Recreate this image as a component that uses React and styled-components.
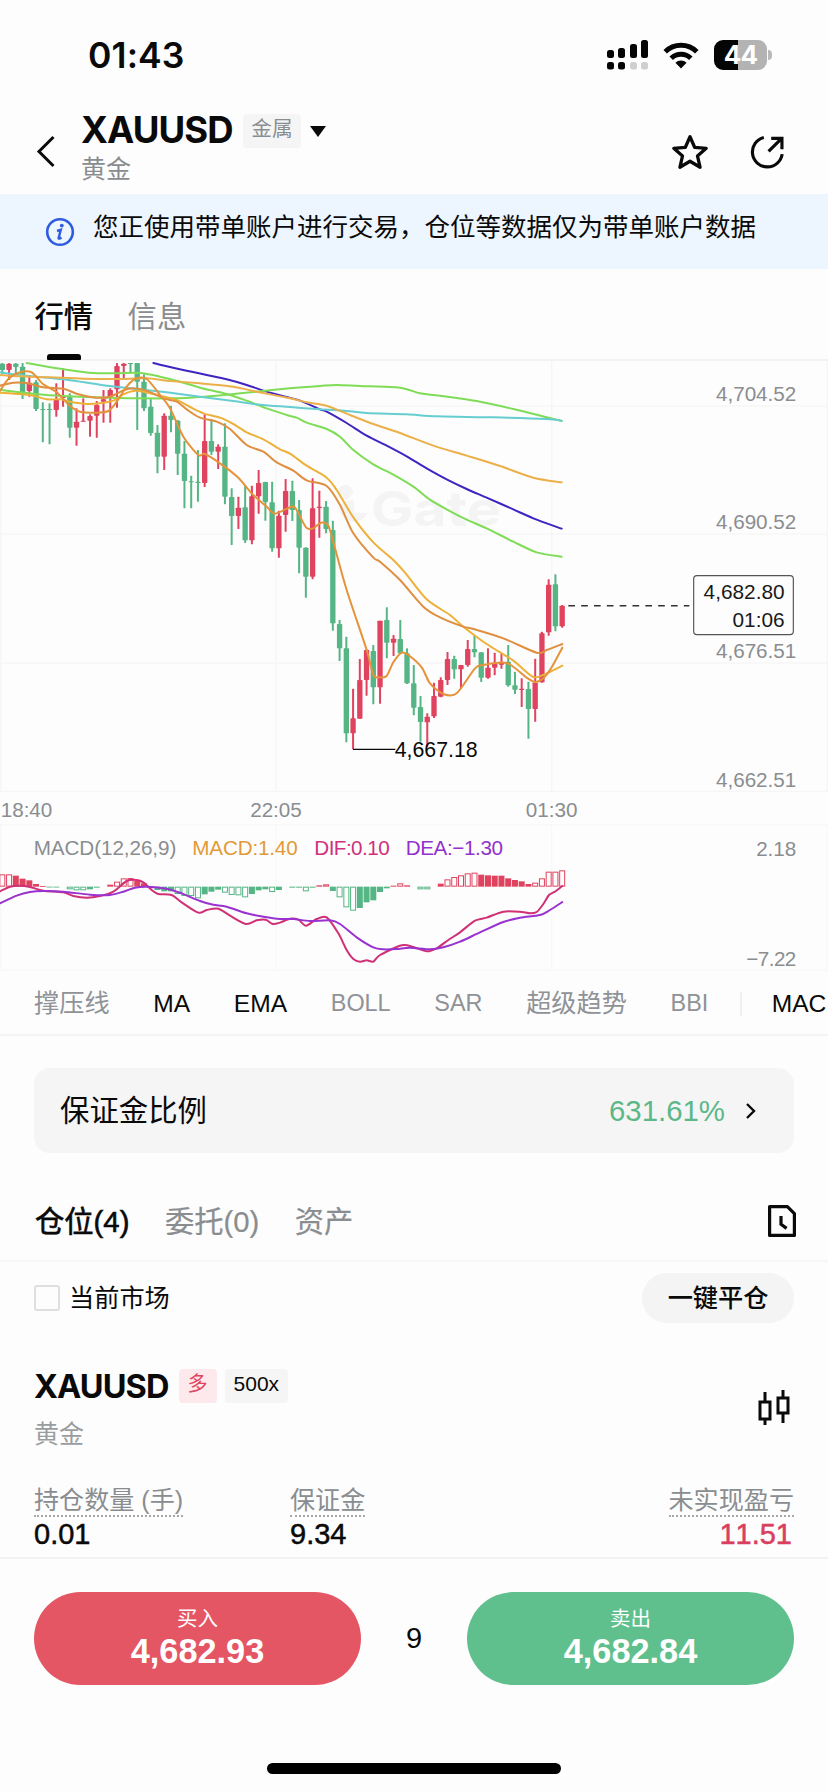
import React from "react";
import styled, { createGlobalStyle } from "styled-components";

const GlobalStyle = createGlobalStyle`
  * { box-sizing: border-box; }
  body { margin: 0; background: #fdfdfd; }
`;

const UP = "#e0435f";
const DOWN = "#56b584";
const FONT = `"Liberation Sans", "Noto Sans CJK SC", sans-serif`;

const Screen = styled.div`
  width: 828px;
  height: 1792px;
  overflow: hidden;
  background: #fdfdfd;
  color: #0a0a0a;
  font-family: ${FONT};
  display: flex;
  flex-direction: column;
  white-space: nowrap;
`;

const StatusBar = styled.div`
  height: 108px;
  flex: none;
  display: flex;
  align-items: center;
  justify-content: space-between;
  padding: 2px 56px 0 88px;
`;
const Time = styled.div`
  font: 600 35.5px/40px Inter, ${FONT};
  letter-spacing: 0.1px;
  padding-top: 1px;
`;
const StatusIcons = styled.div`
  display: flex;
  align-items: center;
  gap: 15px;
`;
const Battery = styled.div`
  width: 53px;
  height: 30px;
  border-radius: 9px;
  background: linear-gradient(90deg, #050505 45%, #b3b3b3 45%);
  color: #fff;
  font: 700 26px/30px Inter, ${FONT};
  letter-spacing: -0.8px;
  text-align: center;
`;
const BatteryGroup = styled.div`
  display: flex;
  align-items: center;
  gap: 1px;
`;
const BatteryTip = styled.div`
  width: 4px;
  height: 10px;
  border-radius: 0 5px 5px 0;
  background: #b9b9b9;
`;

const Header = styled.header`
  height: 86px;
  flex: none;
  display: flex;
  padding: 0 42px 0 36px;
`;
const BackIcon = styled.svg`
  width: 20px;
  height: 34px;
  margin: 26px 25px 0 0;
`;
const HeaderInfo = styled.div`
  flex: 1;
  padding-top: 1px;
`;
const SymbolRow = styled.div`
  display: flex;
  align-items: center;
  height: 44px;
`;
const Symbol = styled.div`
  font: 700 ${(p) => p.$size}px/1.2 Inter, ${FONT};
  letter-spacing: ${(p) => p.$spacing}px;
`;
const Tag = styled.div`
  height: ${(p) => p.$height || 34}px;
  padding: 0 ${(p) => p.$pad}px;
  margin-left: ${(p) => p.$gap}px;
  border-radius: 4px;
  background: ${(p) => p.$bg || "#f5f5f5"};
  color: ${(p) => p.$color || "#0a0a0a"};
  font-size: ${(p) => p.$size || 21}px;
  line-height: ${(p) => p.$line || 30}px;
`;
const Caret = styled.div`
  margin-left: 9px;
  border: 8px solid transparent;
  border-top: 11px solid #0a0a0a;
  border-bottom: 0;
`;
const SubName = styled.div`
  margin-top: ${(p) => p.$top || 0}px;
  font-size: 25px;
  line-height: 32px;
  color: ${(p) => p.$color || "#8a8d90"};
`;
const HeaderIcons = styled.div`
  display: flex;
  gap: 38px;
  padding-top: 24px;
`;

const Banner = styled.div`
  height: 75px;
  flex: none;
  background: #edf5fe;
  display: flex;
  padding: 0 45px;
  font-size: 25.5px;
  line-height: 66px;
`;
const InfoIcon = styled.svg`
  width: 30px;
  height: 30px;
  margin: 23px 18px 0 0;
`;

const MainTabs = styled.nav`
  height: 92px;
  flex: none;
  display: flex;
  gap: 34.5px;
  padding-left: 34.5px;
  border-bottom: 2px solid #f2f2f3;
`;
const MainTab = styled.div`
  display: flex;
  flex-direction: column;
  align-items: center;
  justify-content: space-between;
  font-size: 29.3px;
  line-height: 95px;
  height: 91px;
  color: ${(p) => (p.$active ? "#0a0a0a" : "#8a8d90")};
  font-weight: ${(p) => (p.$active ? 500 : 400)};
`;
const TabLabel = styled.span`
  height: 84px;
`;
const TabMark = styled.i`
  width: 34px;
  height: 6px;
  border-radius: 3px 3px 1px 1px;
  background: #050505;
`;

const Pane = styled.svg`
  display: block;
  width: 828px;
  height: ${(p) => p.$height}px;
  flex: none;
  font-family: ${FONT};
`;

const IndicatorBar = styled.div`
  height: 64px;
  flex: none;
  display: flex;
  align-items: flex-start;
  gap: 43.7px;
  padding-left: 34px;
  border-bottom: 2px solid #f4f4f5;
  overflow: hidden;
`;
const Indicator = styled.span`
  flex: none;
  font-size: ${(p) => (p.$cjk ? 25.2 : p.$on ? 24.6 : 23.4)}px;
  line-height: 63px;
  color: ${(p) => (p.$on ? "#0a0a0a" : "#8f9296")};
`;
const IndicatorDivider = styled.i`
  flex: none;
  width: 2px;
  height: 24px;
  margin: 20px -14px 0 -12px;
  background: #efeff0;
`;

const MarginCard = styled.div`
  height: 85px;
  flex: none;
  margin: 32px 34px 0;
  padding: 0 38px 0 26px;
  border-radius: 16px;
  background: #f5f5f5;
  display: flex;
  align-items: center;
  font-size: 29.4px;
`;
const MarginLabel = styled.span`
  padding-bottom: 5px;
`;
const MarginValue = styled.span`
  margin-left: auto;
  margin-right: 20px;
  color: #5cb889;
  font-size: 29.4px;
`;

const PositionTabs = styled.nav`
  height: 109px;
  flex: none;
  display: flex;
  gap: 35.5px;
  padding: 27px 31px 0 35px;
  border-bottom: 2px solid #f7f7f7;
  font-size: 29.3px;
  line-height: 83px;
`;
const PositionTab = styled.span`
  color: ${(p) => (p.$active ? "#0a0a0a" : "#8a8d90")};
  -webkit-text-stroke: ${(p) => (p.$active ? "0.6px #0a0a0a" : "0.2px #8a8d90")};
`;
const HistoryIcon = styled.svg`
  width: 30px;
  height: 34px;
  margin: 24px 0 0 auto;
`;

const FilterRow = styled.div`
  height: 71px;
  flex: none;
  display: flex;
  align-items: center;
  padding: 0 34px;
  font-size: 25.2px;
`;
const FilterLabel = styled.span`
  padding-bottom: 4px;
`;
const Checkbox = styled.i`
  width: 26px;
  height: 26px;
  margin-right: 9px;
  border: 2px solid #dedfe0;
  border-radius: 3px;
`;
const CloseAll = styled.button`
  margin-left: auto;
  width: 152px;
  height: 50px;
  border: 0;
  border-radius: 25px;
  background: #f4f4f4;
  color: #0a0a0a;
  font: 500 25.2px/48px ${FONT};
  padding: 0;
`;

const Position = styled.section`
  height: 226px;
  flex: none;
  padding: 31px 34px 0;
  border-bottom: 2px solid #f2f2f2;
`;
const PositionHead = styled.div`
  display: flex;
  justify-content: space-between;
  height: 102px;
`;
const Stats = styled.div`
  display: grid;
  grid-template-columns: 256px 1fr auto;
  padding-top: 19px;
`;
const Stat = styled.div`
  display: flex;
  flex-direction: column;
  align-items: ${(p) => (p.$right ? "flex-end" : "flex-start")};
`;
const StatLabel = styled.span`
  font-size: 25.1px;
  line-height: 31px;
  height: 32px;
  color: #8a8d90;
  border-bottom: 2px dotted #a5a7aa;
`;
const StatValue = styled.span`
  font-size: 29px;
  line-height: 35px;
  font-kerning: none;
  padding-right: 2px;
  color: ${(p) => p.$color || "#0a0a0a"};
  -webkit-text-stroke: 0.5px ${(p) => p.$color || "#0a0a0a"};
`;
const CandleIcon = styled.svg`
  width: 34px;
  height: 38px;
  margin: 24px 3px 0 0;
`;

const TradeBar = styled.footer`
  display: flex;
  flex: none;
  align-items: center;
  justify-content: space-between;
  padding: 33px 34px 0;
`;
const TradeButton = styled.button`
  width: 327px;
  height: 93px;
  padding: 0;
  border: 0;
  border-radius: 47px;
  background: ${(p) => p.$bg};
  color: #fff;
  font-family: ${FONT};
  display: flex;
  flex-direction: column;
  align-items: center;
`;
const TradeLabel = styled.span`
  font-size: 20.5px;
  line-height: 26px;
  margin-top: 14px;
`;
const TradePrice = styled.span`
  font-weight: 700;
  font-size: 34.3px;
  line-height: 39px;
`;
const Spread = styled.span`
  font-size: 29px;
`;
const HomeBar = styled.i`
  width: 294px;
  height: 11px;
  flex: none;
  margin: 78px auto 0;
  border-radius: 6px;
  background: #000;
`;

/* Panes are drawn at three units per pixel. */
const STEP = 20.235;
const cx = (i) => 7 + STEP * i;

/* direction, high, body top, body bottom, low */
const candles = [
  ["d", 24, 26, 45, 58], ["u", 24, 26, 45, 75], ["d", 24, 26, 36, 55], ["d", 24, 35, 120, 132],
  ["u", 62, 83, 108, 125], ["d", 75, 82, 162, 168], ["d", 142, 162, 165, 262], ["d", 145, 162, 165, 268],
  ["u", 85, 135, 165, 185], ["u", 40, 124, 129, 155], ["d", 115, 122, 218, 248], ["u", 160, 200, 218, 272],
  ["u", 130, 197, 200, 200], ["u", 178, 183, 197, 245], ["u", 138, 150, 182, 248], ["u", 105, 133, 140, 203],
  ["u", 100, 105, 125, 203], ["u", 24, 33, 103, 158], ["u", 24, 26, 33, 70], ["d", 24, 24, 25, 55],
  ["d", 24, 24, 80, 225], ["d", 58, 80, 160, 168], ["d", 132, 155, 234, 242], ["d", 210, 233, 305, 355],
  ["u", 175, 182, 305, 345], ["d", 152, 182, 195, 232], ["d", 195, 197, 296, 360], ["d", 258, 296, 378, 460],
  ["d", 362, 379, 382, 460], ["d", 285, 380, 384, 440], ["u", 178, 258, 384, 396], ["d", 192, 258, 290, 300],
  ["u", 268, 275, 290, 342], ["d", 205, 275, 425, 448], ["d", 400, 426, 483, 570], ["u", 425, 458, 483, 522],
  ["d", 392, 457, 556, 564], ["u", 392, 424, 556, 568], ["u", 345, 384, 424, 476], ["d", 380, 381, 441, 497],
  ["d", 380, 442, 580, 590], ["u", 467, 482, 580, 608], ["u", 372, 408, 480, 530], ["d", 377, 408, 465, 498],
  ["d", 435, 465, 578, 655], ["d", 577, 578, 665, 728], ["u", 370, 460, 665, 673], ["u", 407, 455, 459, 548],
  ["d", 438, 455, 522, 535], ["d", 497, 525, 805, 827], ["d", 795, 807, 880, 918], ["d", 845, 880, 1135, 1162],
  ["u", 1001, 1090, 1135, 1183], ["u", 912, 975, 1091, 1091], ["u", 883, 885, 975, 1022], ["d", 870, 888, 997, 1048],
  ["u", 797, 797, 997, 1046], ["d", 757, 795, 863, 910], ["u", 840, 851, 863, 903], ["d", 795, 852, 895, 897],
  ["d", 880, 895, 985, 987], ["d", 930, 985, 1058, 1081], ["d", 1023, 1056, 1101, 1160], ["u", 1075, 1085, 1102, 1175],
  ["u", 983, 1023, 1084, 1089], ["u", 967, 975, 1025, 1027], ["u", 891, 912, 975, 990], ["d", 902, 912, 943, 971],
  ["u", 930, 930, 943, 1001], ["u", 855, 882, 930, 935], ["d", 842, 882, 892, 907], ["d", 892, 892, 968, 981],
  ["u", 880, 938, 968, 971], ["u", 893, 925, 938, 961], ["u", 895, 923, 929, 941], ["d", 870, 920, 991, 995],
  ["d", 950, 991, 1004, 1017], ["u", 970, 1001, 1005, 1056], ["d", 980, 1002, 1062, 1151], ["u", 911, 983, 1062, 1100],
  ["u", 830, 835, 982, 983], ["u", 673, 689, 832, 842], ["d", 658, 688, 814, 829], ["u", 750, 752, 814, 818],
];

const averages = [
  ["#4024c2", "460,24 500,34 560,47 620,60 680,73 740,90 800,110 860,126 900,137 960,163 980,170 1040,204 1100,242 1160,272 1220,304 1280,340 1340,373 1400,402 1460,428 1540,463 1600,490 1685,521"],
  ["#7fdc56", "80,24 130,33 200,44 280,54 330,55 420,54 480,65 540,80 600,98 680,117 740,137 800,160 870,183 890,188 920,203 980,222 1020,245 1060,285 1120,328 1180,359 1240,395 1290,434 1340,463 1400,494 1460,520 1540,560 1610,592 1685,605"],
  ["#7fdc56", "0,104 60,112 140,120 240,125 330,128 420,130 520,130 600,126 680,119 760,111 870,100 960,93 1010,90 1080,93 1200,98 1260,115 1320,122 1430,138 1540,162 1640,187 1685,198"],
  ["#66cdd0", "0,52 80,62 200,74 300,89 400,101 500,112 600,125 700,138 780,149 870,156 960,163 1040,168 1100,174 1220,178 1310,184 1480,187 1640,192 1685,197"],
  ["#ecb04a", "0,60 60,64 150,67 250,71 350,72 440,70 500,77 600,85 700,95 760,108 870,130 920,142 980,152 1040,176 1120,207 1200,234 1300,272 1400,302 1500,333 1600,368 1685,382"],
  ["#edb139", "0,113 60,117 100,122 140,133 180,133 210,140 260,147 300,145 340,137 370,118 400,108 430,110 480,122 530,135 570,156 610,175 660,188 700,207 740,232 790,253 840,283 870,296 920,332 980,368 1010,405 1060,487 1120,562 1180,615 1215,653 1280,733 1350,780 1390,815 1460,867 1540,917 1600,966 1640,955 1687,932"],
  ["#df8f3f", "0,92 40,83 80,84 130,97 190,101 230,116 290,128 330,125 370,106 400,100 440,107 490,130 530,140 560,163 600,188 650,200 690,222 740,270 790,290 830,322 880,347 920,376 980,393 1020,450 1060,535 1120,608 1140,620 1200,675 1270,755 1320,787 1390,815 1420,822 1510,850 1610,893 1640,885 1687,867"],
  ["#e5933a", "0,108 25,72 60,52 95,52 130,88 170,112 210,153 240,170 290,173 325,168 350,140 380,95 405,72 440,72 480,120 510,160 550,245 595,300 615,297 660,325 715,368 755,415 800,455 825,476 875,455 890,465 918,517 940,520 963,503 985,512 1005,580 1040,705 1100,885 1120,960 1140,967 1160,963 1180,922 1205,893 1225,900 1265,937 1290,985 1330,1017 1370,1015 1425,940 1450,930 1520,924 1580,968 1605,981 1630,970 1655,937 1687,878"],
];

/* kind: hollow (h) or filled (f), then bar end; index follows the candles */
const macdBars = [
  "h283", "h283", "f287", "f296", "f301", "f312", "f318", "f322", "f322", "", "h328", "h331", "h331", "f328", "f323",
  "", "h314", "h305", "h295", "h294", "f303", "f310", "f319", "f330", "f334", "f334", "h342", "h348", "h348", "h355",
  "f343", "f335", "f329", "h338", "h345", "h346", "h352", "f342", "f331", "f328", "h336", "f330", "", "f323", "f323",
  "h334", "f323", "f316", "h313", "f333", "h352", "h382", "h392", "f384", "f367", "f361", "f336", "f325", "f317", "h310",
  "f316", "", "h328", "h328", "", "f311", "h298", "h291", "h286", "h280", "h278", "f284", "f286", "f287", "f287",
  "f295", "f300", "f304", "f312", "h308", "h295", "h275", "h275", "h271",
];
const DIF = "0,334 30,320 60,317 90,321 130,332 190,337 220,348 260,353 300,348 340,335 380,303 410,300 430,307 455,330 475,342 515,345 545,367 595,398 620,390 655,386 690,407 738,432 770,421 797,419 818,432 840,428 870,416 895,419 918,437 950,417 980,412 1015,460 1040,510 1060,537 1080,545 1100,541 1120,545 1140,525 1205,496 1240,501 1280,514 1310,505 1345,480 1380,457 1425,422 1460,413 1510,395 1565,396 1590,400 1610,396 1630,372 1647,345 1665,335 1687,318";
const DEA = "0,370 50,347 90,336 130,333 190,335 270,344 330,345 370,335 405,323 440,320 500,326 545,340 600,363 640,374 680,380 740,400 790,410 840,417 880,417 930,423 990,421 1020,432 1070,472 1120,502 1150,508 1190,507 1230,503 1290,508 1330,502 1380,485 1440,457 1510,426 1560,413 1620,405 1650,390 1687,366";

/* Catmull-Rom spline through "x,y x,y ..." */
function curve(text) {
  const p = text.split(" ").map((s) => s.split(",").map(Number));
  let d = `M${p[0]}`;
  for (let i = 0; i < p.length - 1; i++) {
    const a = p[i - 1] || p[i];
    const b = p[i];
    const c = p[i + 1];
    const e = p[i + 2] || c;
    d += `C${b[0] + (c[0] - a[0]) / 7},${b[1] + (c[1] - a[1]) / 7} ${c[0] - (e[0] - b[0]) / 7},${c[1] - (e[1] - b[1]) / 7} ${c}`;
  }
  return d;
}

function PricePane() {
  return (
    <Pane viewBox="0 18 2484 1293" $height={431}>
      <g stroke="#f6f6f7" strokeWidth="4">
        {[153, 537, 924, 1309].map((y) => <path key={y} d={`M0 ${y}H2484`} />)}
        {[2, 828, 1655, 2482].map((x) => <path key={x} d={`M${x} 20V1311`} />)}
      </g>
      <g fill="#f4f4f5">
        <text x="1112" y="513" fontFamily="Inter" fontWeight="700" fontSize="144" textLength="390" lengthAdjust="spacingAndGlyphs">Gate</text>
        <path d="M1020 432a24 24 0 1 1 40 -20l-18 22zM1018 452a44 44 0 0 0 84 22h-40v-38h-20z" />
      </g>
      {candles.map(([dir, high, top, bottom, low], i) => (
        <g key={i} fill={dir === "u" ? UP : DOWN}>
          <rect x={cx(i) - 3} y={high} width="6" height={low - high} rx="1.5" />
          <rect x={cx(i) - 8} y={top} width="16" height={Math.max(bottom - top, 3)} rx="2" />
        </g>
      ))}
      {averages.map(([color, pts], i) => (
        <path key={i} d={curve(pts)} fill="none" stroke={color} strokeWidth="6" strokeLinecap="round" />
      ))}
      <path d="M1059 1183H1186" stroke="#0a0a0a" strokeWidth="4" />
      <text x="1184" y="1207" fontSize="64" fill="#0a0a0a">4,667.18</text>
      <g fontSize="62" fill="#8a8d90" textAnchor="end">
        <text x="2389" y="137">4,704.52</text>
        <text x="2389" y="522">4,690.52</text>
        <text x="2389" y="909">4,676.51</text>
        <text x="2389" y="1295">4,662.51</text>
      </g>
      <path d="M1705 752H2068" stroke="#333" strokeWidth="4.5" strokeDasharray="20 18.5" />
      <rect x="2081" y="662" width="299" height="177" rx="10" fill="#fdfdfd" stroke="#555" strokeWidth="3.5" />
      <g fontSize="62.5" fill="#1a1a1a" textAnchor="end">
        <text x="2354" y="732">4,682.80</text>
        <text x="2354" y="816">01:06</text>
      </g>
    </Pane>
  );
}

function MacdPane() {
  return (
    <Pane viewBox="0 36 2484 540" $height={180}>
      <g stroke="#f8f8f9" strokeWidth="4">
        <path d="M0 134H2484M0 571H2484M2 136V571M828 136V571M1655 136V571M2482 136V571" />
      </g>
      <g fontSize="62" fill="#8a8d90">
        <text x="2" y="111">18:40</text>
        <text x="828" y="111" textAnchor="middle">22:05</text>
        <text x="1655" y="111" textAnchor="middle">01:30</text>
        <text x="101" y="226" textLength="428">MACD(12,26,9)</text>
        <text x="2389" y="228" textAnchor="end">2.18</text>
        <text x="2389" y="557" textAnchor="end" textLength="150">−7.22</text>
        <text x="577" y="226" fill="#e29a38" textLength="316">MACD:1.40</text>
        <text x="943" y="226" fill="#cf3080" textLength="226">DIF:0.10</text>
        <text x="1217" y="226" fill="#9232cc" textLength="292">DEA:−1.30</text>
      </g>
      {macdBars.map((bar, i) => {
        if (!bar) return null;
        const end = Number(bar.slice(1));
        const up = end < 320.5;
        const color = up ? UP : DOWN;
        const hollow = bar[0] === "h";
        const inset = hollow ? 1.5 : 0;
        const y = up ? end : 320;
        const h = Math.max(Math.abs(320 - end), 2.5);
        return (
          <rect key={i} x={cx(i) - 9 + inset} y={y + inset} width={18 - inset * 2} height={Math.max(h - inset * 2, 1)}
            fill={hollow ? "none" : color} stroke={hollow ? color : "none"} strokeWidth="3" />
        );
      })}
      <path d={curve(DIF)} fill="none" stroke="#cf3076" strokeWidth="6" strokeLinecap="round" />
      <path d={curve(DEA)} fill="none" stroke="#9a32d0" strokeWidth="6" strokeLinecap="round" />
    </Pane>
  );
}

function SignalIcon() {
  const bars = [[0, 10], [11, 8], [23, 4], [34, 0]];
  return (
    <svg width="41" height="30" viewBox="0 0 41 30">
      {bars.map(([x, y], i) => (
        <g key={x}>
          <rect x={x} y={y} width="7" height={18 - y} rx="2.5" fill="#050505" />
          <rect x={x} y="22" width="7" height="7.5" rx="2.5" fill={i < 2 ? "#050505" : "#cfcfcf"} />
        </g>
      ))}
    </svg>
  );
}

function WifiIcon() {
  return (
    <svg width="36" height="27" viewBox="0 0 36 27">
      <g fill="none" stroke="#050505" strokeWidth="5">
        <path d="M2.2 9.8a22.5 22.5 0 0 1 31.6 0" />
        <path d="M8.2 16.2a14 14 0 0 1 19.6 0" />
      </g>
      <path d="M18 26.5l-5.6-5.8a8 8 0 0 1 11.2 0z" fill="#050505" />
    </svg>
  );
}

export default function App() {
  return (
    <Screen>
      <GlobalStyle />
      <StatusBar>
        <Time>01:43</Time>
        <StatusIcons>
          <SignalIcon />
          <WifiIcon />
          <BatteryGroup>
            <Battery>44</Battery>
            <BatteryTip />
          </BatteryGroup>
        </StatusIcons>
      </StatusBar>

      <Header>
        <BackIcon viewBox="0 0 20 34">
          <path d="M17.5 3L3 17.5L17.5 32" fill="none" stroke="#0a0a0a" strokeWidth="3" />
        </BackIcon>
        <HeaderInfo>
          <SymbolRow>
            <Symbol $size={36.5} $spacing={-0.9}>XAUUSD</Symbol>
            <Tag $pad={8.5} $gap={10} $size={20.7} $color="#8a8d90">金属</Tag>
            <Caret />
          </SymbolRow>
          <SubName>黄金</SubName>
        </HeaderInfo>
        <HeaderIcons>
          <svg width="40" height="40" viewBox="0 0 38 38">
            <path d="M19 4.5l4.4 10 11 1-8.3 7.2 2.5 10.8L19 27.8l-9.6 5.7 2.5-10.8-8.3-7.2 11-1z" fill="none" stroke="#0a0a0a" strokeWidth="3.1" strokeLinejoin="round" />
          </svg>
          <svg width="38" height="40" viewBox="0 0 36 38">
            <g fill="none" stroke="#0a0a0a" strokeWidth="3">
              <path d="M15 5.2A14.2 14.2 0 1 0 32.4 21" />
              <path d="M19.5 18.5L31 7M22 6h10.2v10.5" />
            </g>
          </svg>
        </HeaderIcons>
      </Header>

      <Banner>
        <InfoIcon viewBox="0 0 30 30">
          <circle cx="15" cy="15" r="12.8" fill="none" stroke="#2f5be0" strokeWidth="2.6" />
          <circle cx="16.8" cy="8.6" r="1.9" fill="#2f5be0" />
          <path d="M12 14l3.8-1.2-2.2 8.2q-.2 1.4 2.9-.6" fill="none" stroke="#2f5be0" strokeWidth="2.4" />
        </InfoIcon>
        您正使用带单账户进行交易，仓位等数据仅为带单账户数据
      </Banner>

      <MainTabs>
        <MainTab $active><TabLabel>行情</TabLabel><TabMark /></MainTab>
        <MainTab><TabLabel>信息</TabLabel></MainTab>
      </MainTabs>

      <PricePane />
      <MacdPane />

      <IndicatorBar>
        <Indicator $cjk>撑压线</Indicator>
        <Indicator $on>MA</Indicator>
        <Indicator $on>EMA</Indicator>
        <Indicator>BOLL</Indicator>
        <Indicator>SAR</Indicator>
        <Indicator $cjk>超级趋势</Indicator>
        <Indicator>BBI</Indicator>
        <IndicatorDivider />
        <Indicator $on>MAC</Indicator>
      </IndicatorBar>

      <MarginCard>
        <MarginLabel>保证金比例</MarginLabel>
        <MarginValue>631.61%</MarginValue>
        <svg width="11" height="18" viewBox="0 0 11 18">
          <path d="M2 2l7 7-7 7" fill="none" stroke="#0a0a0a" strokeWidth="2.4" />
        </svg>
      </MarginCard>

      <PositionTabs>
        <PositionTab $active>仓位(4)</PositionTab>
        <PositionTab>委托(0)</PositionTab>
        <PositionTab>资产</PositionTab>
        <HistoryIcon viewBox="0 0 30 34">
          <g fill="none" stroke="#0a0a0a" strokeWidth="3.2">
            <path d="M2.6 2.6h17.8l7 7v21.8H2.6z" strokeLinejoin="round" />
            <path d="M14 12v8.2l5.6 4.2" />
          </g>
        </HistoryIcon>
      </PositionTabs>

      <FilterRow>
        <Checkbox />
        <FilterLabel>当前市场</FilterLabel>
        <CloseAll>一键平仓</CloseAll>
      </FilterRow>

      <Position>
        <PositionHead>
          <div>
            <SymbolRow>
              <Symbol $size={32.5} $spacing={-0.9}>XAUUSD</Symbol>
              <Tag $pad={9} $gap={10} $size={20} $bg="#fde9eb" $color="#e0435f">多</Tag>
              <Tag $pad={9} $gap={8}>500x</Tag>
            </SymbolRow>
            <SubName $top={10} $color="#9a9da0">黄金</SubName>
          </div>
          <CandleIcon viewBox="0 0 34 38">
            <g fill="none" stroke="#0a0a0a" strokeWidth="3">
              <path d="M3 14h10v17H3zM8 4v10M8 31v6" />
              <path d="M21 10h10v15H21zM26 2v8M26 25v10" />
            </g>
          </CandleIcon>
        </PositionHead>
        <Stats>
          <Stat>
            <StatLabel>持仓数量 (手)</StatLabel>
            <StatValue>0.01</StatValue>
          </Stat>
          <Stat>
            <StatLabel>保证金</StatLabel>
            <StatValue>9.34</StatValue>
          </Stat>
          <Stat $right>
            <StatLabel>未实现盈亏</StatLabel>
            <StatValue $color="#d9405f">11.51</StatValue>
          </Stat>
        </Stats>
      </Position>

      <TradeBar>
        <TradeButton $bg="#e45664">
          <TradeLabel>买入</TradeLabel>
          <TradePrice>4,682.93</TradePrice>
        </TradeButton>
        <Spread>9</Spread>
        <TradeButton $bg="#5fc08d">
          <TradeLabel>卖出</TradeLabel>
          <TradePrice>4,682.84</TradePrice>
        </TradeButton>
      </TradeBar>
      <HomeBar />
    </Screen>
  );
}
